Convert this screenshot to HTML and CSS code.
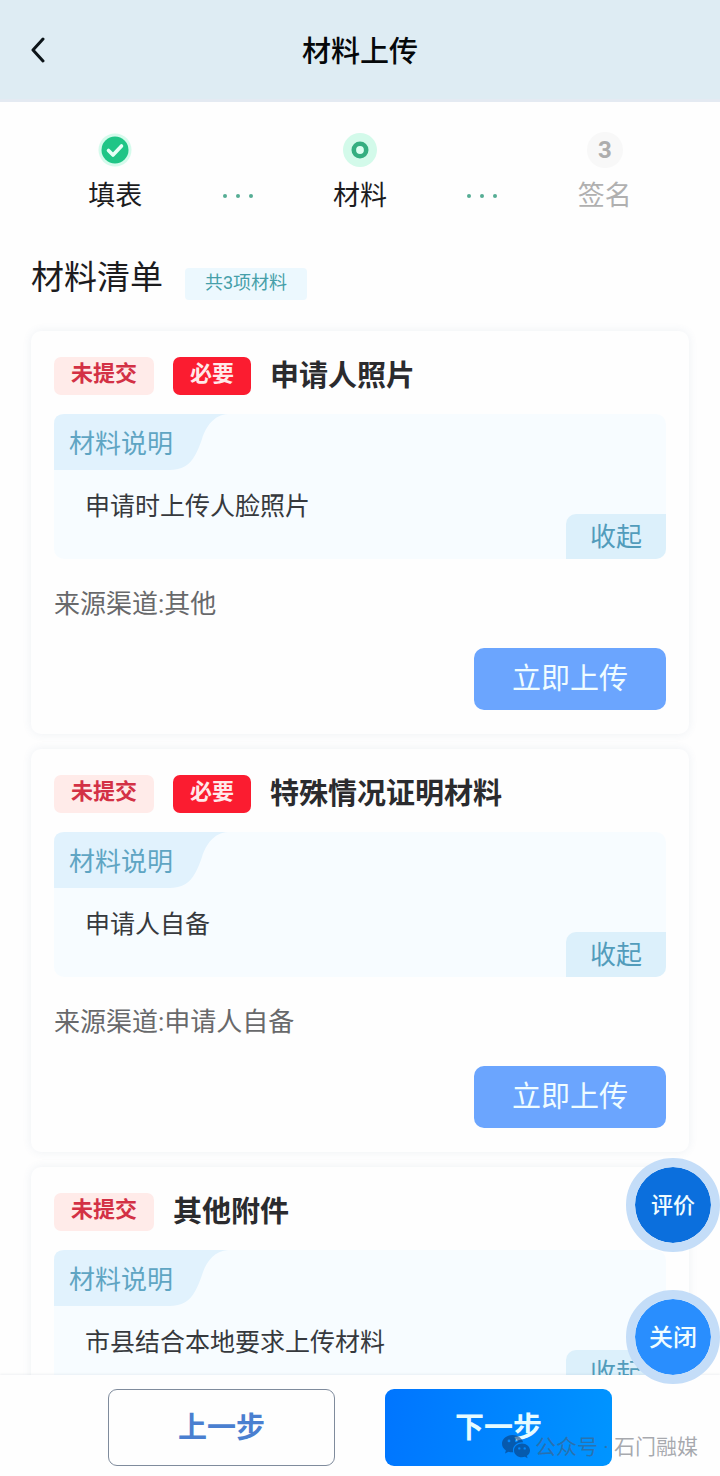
FILE: index.html
```html
<!DOCTYPE html>
<html lang="zh-CN">
<head>
<meta charset="utf-8">
<meta name="viewport" content="width=device-width, initial-scale=1">
<title>材料上传</title>
<link rel="stylesheet" href="styles.css">
</head>
<body>
<div class="app">
  <header class="topbar">
    <button class="back" type="button" aria-label="返回">
      <svg width="16" height="26" viewBox="0 0 16 26" fill="none" stroke="currentColor" stroke-width="3" stroke-linecap="round" stroke-linejoin="round"><path d="M13 2 3 13l10 11"/></svg>
    </button>
    <h1 class="topbar-title">材料上传</h1>
  </header>

  <main class="content">
    <ol class="steps">
      <li class="step">
        <svg class="step-icon" viewBox="0 0 36 36"><circle cx="18" cy="18" r="16.500" fill="#d5fbec"/><circle cx="18" cy="18" r="13.500" fill="#1fc586"/><path d="M11.500 18.500l4.500 4.500 8.500-9" fill="none" stroke="#e6fff6" stroke-width="3.600" stroke-linecap="round" stroke-linejoin="round"/></svg>
        <span>填表</span>
      </li>
      <li class="dots" aria-hidden="true"><i></i><i></i><i></i></li>
      <li class="step" aria-current="step">
        <svg class="step-icon" viewBox="0 0 36 36"><circle cx="18" cy="18" r="17" fill="#d3faea"/><circle cx="18" cy="18" r="6.200" fill="#dcfff1" stroke="#35ae80" stroke-width="4.600"/></svg>
        <span>材料</span>
      </li>
      <li class="dots" aria-hidden="true"><i></i><i></i><i></i></li>
      <li class="step step-pending">
        <span class="step-icon step-number">3</span>
        <span>签名</span>
      </li>
    </ol>

    <div class="list-head">
      <h2 class="list-title">材料清单</h2>
      <span class="count">共3项材料</span>
    </div>

    <div class="cards">
      <section class="card">
        <div class="card-head">
          <span class="tag tag-status">未提交</span>
          <span class="tag tag-required">必要</span>
          <h3 class="card-title">申请人照片</h3>
        </div>
        <div class="note">
          <div class="note-tab">材料说明</div>
          <p class="note-text">申请时上传人脸照片</p>
          <button class="collapse" type="button">收起</button>
        </div>
        <p class="source">来源渠道:其他</p>
        <button class="upload" type="button">立即上传</button>
      </section>

      <section class="card">
        <div class="card-head">
          <span class="tag tag-status">未提交</span>
          <span class="tag tag-required">必要</span>
          <h3 class="card-title">特殊情况证明材料</h3>
        </div>
        <div class="note">
          <div class="note-tab">材料说明</div>
          <p class="note-text">申请人自备</p>
          <button class="collapse" type="button">收起</button>
        </div>
        <p class="source">来源渠道:申请人自备</p>
        <button class="upload" type="button">立即上传</button>
      </section>

      <section class="card">
        <div class="card-head">
          <span class="tag tag-status">未提交</span>
          <h3 class="card-title">其他附件</h3>
        </div>
        <div class="note">
          <div class="note-tab">材料说明</div>
          <p class="note-text">市县结合本地要求上传材料</p>
          <button class="collapse" type="button">收起</button>
        </div>
      </section>
    </div>
  </main>

  <footer class="actions">
    <button class="btn btn-prev" type="button">上一步</button>
    <button class="btn btn-next" type="button">下一步</button>
  </footer>

  <div class="floats">
    <button class="float float-rate" type="button">评价</button>
    <button class="float float-close" type="button">关闭</button>
  </div>

  <div class="watermark">
    <svg width="28" height="26" viewBox="0 0 28 26" fill="currentColor" fill-rule="evenodd"><path d="M10.500 1C4.700 1 0 4.900 0 9.700c0 2.700 1.500 5.100 3.900 6.700L3 19.500l3.500-1.800c1.200.4 2.600.6 4 .6h.7a7 7 0 0 1-.3-2c0-4.500 4.300-8 9.500-8h.7C20.200 4.200 15.800 1 10.500 1zM7 5.500a1.400 1.400 0 1 1 0 2.800 1.400 1.400 0 0 1 0-2.800zm7.200 0a1.400 1.400 0 1 1 0 2.800 1.400 1.400 0 0 1 0-2.800z"/><path d="M20 9.600c-4.500 0-8 3-8 6.800s3.500 6.900 8 6.900c1 0 2-.2 2.900-.5l2.700 1.500-.7-2.500c1.900-1.300 3.100-3.200 3.100-5.400 0-3.800-3.600-6.800-8-6.800zm-2.700 3.600a1.200 1.200 0 1 1 0 2.400 1.200 1.200 0 0 1 0-2.400zm5.400 0a1.200 1.200 0 1 1 0 2.400 1.200 1.200 0 0 1 0-2.400z"/></svg>
    <span>公众号 · 石门融媒</span>
  </div>
</div>
</body>
</html>
```
FILE: styles.css
```css
* {
  box-sizing: border-box;
}

body,
h1,
h2,
h3,
p,
ol {
  margin: 0;
  padding: 0;
}

body {
  font-family: Roboto, "Noto Sans CJK SC", sans-serif;
  color: #1c1c1e;
  background: #fefefe;
}

button {
  font-family: inherit;
  border: 0;
  padding: 0;
  cursor: pointer;
}

.app {
  position: relative;
  display: flex;
  flex-direction: column;
  height: 100vh;
  overflow: hidden;
}

/* Header */
.topbar {
  flex: none;
  display: grid;
  grid-template-columns: 76px 1fr 76px;
  align-items: center;
  height: 102px;
  background: #deecf3;
  border-bottom: 3px solid #e4eaf2;
}

.back {
  display: flex;
  justify-content: center;
  background: none;
  color: #0c1418;
}

.topbar-title {
  padding-top: 4px;
  font-size: 29px;
  line-height: 40px;
  font-weight: 500;
  text-align: center;
  color: #05080a;
}

/* Scrolling area */
.content {
  flex: 1;
  min-height: 0;
  overflow-y: auto;
  scrollbar-width: none;
}

.steps {
  display: grid;
  grid-template-columns: repeat(5, 1fr);
  padding: 30px 54px 0;
  list-style: none;
}

.step {
  display: flex;
  flex-direction: column;
  align-items: center;
  gap: 8px;
  font-size: 27px;
  line-height: 40px;
}

.step-icon {
  width: 36px;
  height: 36px;
}

.step-number {
  border-radius: 50%;
  background: #f8f8f8;
  font-size: 24px;
  line-height: 36px;
  font-weight: 700;
  text-align: center;
  color: #adadad;
}

.step-pending {
  color: #b0b0b0;
}

.dots {
  display: flex;
  align-items: center;
  justify-content: center;
  align-self: end;
  gap: 9px;
  height: 40px;
}

.dots i {
  width: 4px;
  height: 4px;
  border-radius: 50%;
  background: #55ad94;
}

.list-head {
  display: flex;
  align-items: flex-end;
  gap: 22px;
  padding: 40px 31px 0;
}

.list-title {
  font-size: 33px;
  line-height: 44px;
  font-weight: 400;
}

.count {
  height: 32px;
  padding: 0 20px;
  border-radius: 4px;
  background: #ecf8fe;
  font-size: 18px;
  line-height: 30px;
  color: #469fa9;
}

/* Cards */
.cards {
  display: flex;
  flex-direction: column;
  gap: 15px;
  padding: 31px 31px 24px;
}

.card {
  display: flex;
  flex-direction: column;
  padding: 26px 23px 24px;
  border-radius: 10px;
  background: #fefefe;
  box-shadow: 0 0 10px rgba(70, 100, 140, 0.09);
}

.card-head {
  display: flex;
  align-items: flex-start;
  gap: 19px;
  height: 38px;
}

.tag {
  height: 38px;
  padding: 0 17px;
  border-radius: 7px;
  font-size: 22px;
  line-height: 33px;
  font-weight: 700;
}

.tag-status {
  background: #ffebe9;
  color: #d33145;
}

.tag-required {
  background: #fb1c30;
  color: #ffe9ea;
}

.card-title {
  font-size: 29px;
  line-height: 38px;
  font-weight: 700;
  color: #2b2b2e;
}

.note {
  display: flex;
  flex-direction: column;
  margin-top: 19px;
  border-radius: 10px;
  background: #f7fcff;
}

.note-tab {
  width: 174px;
  height: 56px;
  padding-left: 15px;
  background: #e1f2fd;
  clip-path: path("M0 10Q0 0 10 0H174C160 1 152 12 148 25C142 42 136 56 116 56H0Z");
  font-size: 26px;
  line-height: 60px;
  color: #5fa5c3;
}

.note-text {
  height: 44px;
  padding: 18px 31px 0;
  font-size: 25px;
  line-height: 38px;
  white-space: nowrap;
  color: #36393d;
}

.collapse {
  align-self: flex-end;
  width: 100px;
  height: 45px;
  border-radius: 10px 0 10px 0;
  background: #dcf0fb;
  font-size: 26px;
  line-height: 38px;
  color: #529cbb;
}

.source {
  margin-top: 26px;
  font-size: 26px;
  line-height: 38px;
  color: #68696b;
}

.upload {
  align-self: flex-end;
  width: 192px;
  height: 62px;
  margin-top: 25px;
  border-radius: 10px;
  background: #6ba5fe;
  font-size: 29px;
  line-height: 40px;
  color: #effcff;
}

/* Bottom bar */
.actions {
  flex: none;
  display: grid;
  grid-template-columns: 1fr 1fr;
  gap: 50px;
  padding: 14px 15% 10px;
  background: #fefefe;
  box-shadow: 0 -1px 2px rgba(70, 90, 120, 0.08);
  z-index: 1;
}

.btn {
  height: 77px;
  border-radius: 9px;
  font-size: 29px;
  font-weight: 700;
  line-height: 40px;
}

.btn-prev {
  border: 1px solid #7f8b9c;
  background: #fefefe;
  color: #4a7fd0;
}

.btn-next {
  background: linear-gradient(100deg, #0075ff, #0095ff);
  color: #e6fbff;
}

/* Floating controls */
.floats {
  position: absolute;
  right: 0;
  bottom: 92px;
  z-index: 2;
  display: flex;
  flex-direction: column;
  gap: 38px;
}

.float {
  width: 94px;
  height: 94px;
  padding-top: 2px;
  border: 9px solid #c4ddf8;
  border-radius: 50%;
  background-clip: padding-box;
  font-weight: 500;
  line-height: 32px;
  color: #effcff;
}

.float-rate {
  background-color: #0b6fdd;
  font-size: 22px;
}

.float-close {
  background-color: #298efe;
  font-size: 24px;
}

.watermark {
  position: absolute;
  right: 22px;
  bottom: 14px;
  z-index: 3;
  display: flex;
  align-items: center;
  gap: 5px;
  font-size: 21px;
  line-height: 30px;
  color: rgba(80, 85, 95, 0.5);
  pointer-events: none;
}

.watermark svg {
  color: rgba(10, 60, 120, 0.6);
}
```
